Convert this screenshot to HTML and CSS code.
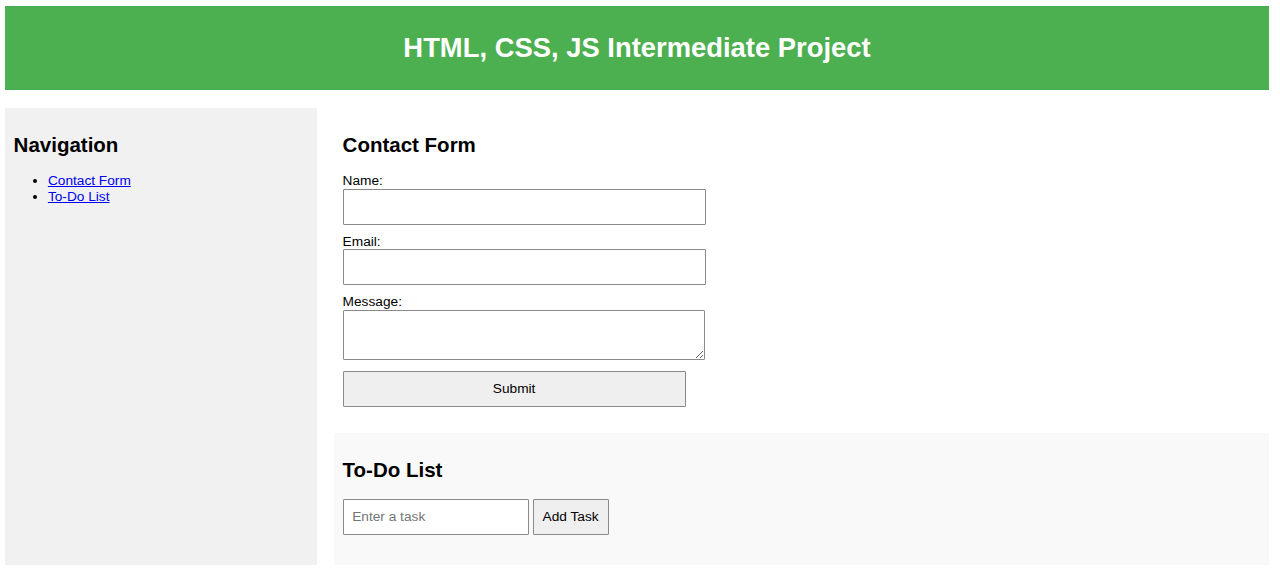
FILE: index.html
```html
<!DOCTYPE html>
<html lang="en">
<head>
<meta charset="utf-8">
<title>HTML, CSS, JS Intermediate Project</title>
<link rel="stylesheet" href="styles.css">
</head>
<body>
<header class="site-header">
  <h1 class="site-title">HTML, CSS, JS Intermediate Project</h1>
</header>
<div class="layout">
  <aside class="sidebar">
    <h2 class="heading">Navigation</h2>
    <ul class="nav-list">
      <li><a href="#contact">Contact Form</a></li>
      <li><a href="#todo">To-Do List</a></li>
    </ul>
  </aside>
  <main class="content">
    <section class="panel contact" id="contact">
      <h2 class="heading">Contact Form</h2>
      <form class="contact-form">
        <label class="field-label" for="name">Name:</label>
        <input class="field" type="text" id="name">
        <label class="field-label" for="email">Email:</label>
        <input class="field" type="email" id="email">
        <label class="field-label" for="message">Message:</label>
        <textarea class="field area" id="message"></textarea>
        <button class="submit-btn" type="submit">Submit</button>
      </form>
    </section>
    <section class="panel todo" id="todo">
      <h2 class="heading">To-Do List</h2>
      <div class="todo-row">
        <input class="task-input" type="text" placeholder="Enter a task">
        <button class="add-btn" type="button">Add Task</button>
      </div>
    </section>
  </main>
</div>
</body>
</html>
```
FILE: styles.css
```css
html, body {
  background: #ffffff;
}
body {
  margin: 6px 11px 0 5px;
  font-family: "Liberation Sans", Arial, sans-serif;
  font-size: 13.7px;
  color: #000;
}
.site-header {
  background: #4caf50;
  height: 84px;
  display: flex;
  align-items: center;
  justify-content: center;
}
.site-title {
  margin: 0;
  color: #fff;
  font-size: 27.4px;
  font-weight: bold;
  line-height: 32px;
}
.layout {
  display: flex;
  gap: 17px;
  margin-top: 18px;
  align-items: stretch;
}
.sidebar {
  width: 312px;
  flex: none;
  box-sizing: border-box;
  background: #f1f1f1;
  padding: 8.6px;
}
.heading {
  font-size: 20.5px;
  font-weight: bold;
  line-height: 23.6px;
  margin: 16px 0 17px;
}
.nav-list {
  margin: 0;
  padding-left: 34.3px;
  line-height: 15.8px;
}
.nav-list a {
  color: #0000ee;
}
.content {
  flex: 1;
  display: flex;
  flex-direction: column;
}
.panel {
  padding: 8.6px;
}
.contact {
  margin-bottom: 18px;
}
.contact-form {
  width: 343px;
  display: flex;
  flex-direction: column;
}
.field-label {
  display: block;
  line-height: 15.8px;
}
.field {
  display: block;
  height: 36px;
  box-sizing: border-box;
  width: 363px;
  margin: 0 0 8.6px 0;
  padding: 8.6px;
  border: 1px solid #8a8a8a;
  border-radius: 1px;
  font-family: inherit;
  font-size: 13.7px;
  background: #fff;
}
.area {
  height: 50px;
  width: 362px;
  resize: vertical;
  margin-bottom: 11px;
}
.submit-btn {
  width: 343px;
  height: 36px;
  background: #efefef;
  border: 1px solid #8a8a8a;
  border-radius: 1px;
  font-family: inherit;
  font-size: 13.7px;
  color: #000;
  padding: 0;
}
.todo {
  background: #f9f9f9;
  padding-bottom: 30px;
}
.todo-row {
  display: flex;
  gap: 4px;
}
.task-input {
  width: 186px;
  height: 36px;
  box-sizing: border-box;
  padding: 8.6px;
  border: 1px solid #8a8a8a;
  border-radius: 1px;
  font-family: inherit;
  font-size: 13.7px;
  margin: 0;
  background: #fff;
}
.task-input::placeholder {
  color: #757575;
}
.add-btn {
  width: 76px;
  height: 36px;
  background: #efefef;
  border: 1px solid #8a8a8a;
  border-radius: 1px;
  font-family: inherit;
  font-size: 13.7px;
  color: #000;
  padding: 0;
}
```
